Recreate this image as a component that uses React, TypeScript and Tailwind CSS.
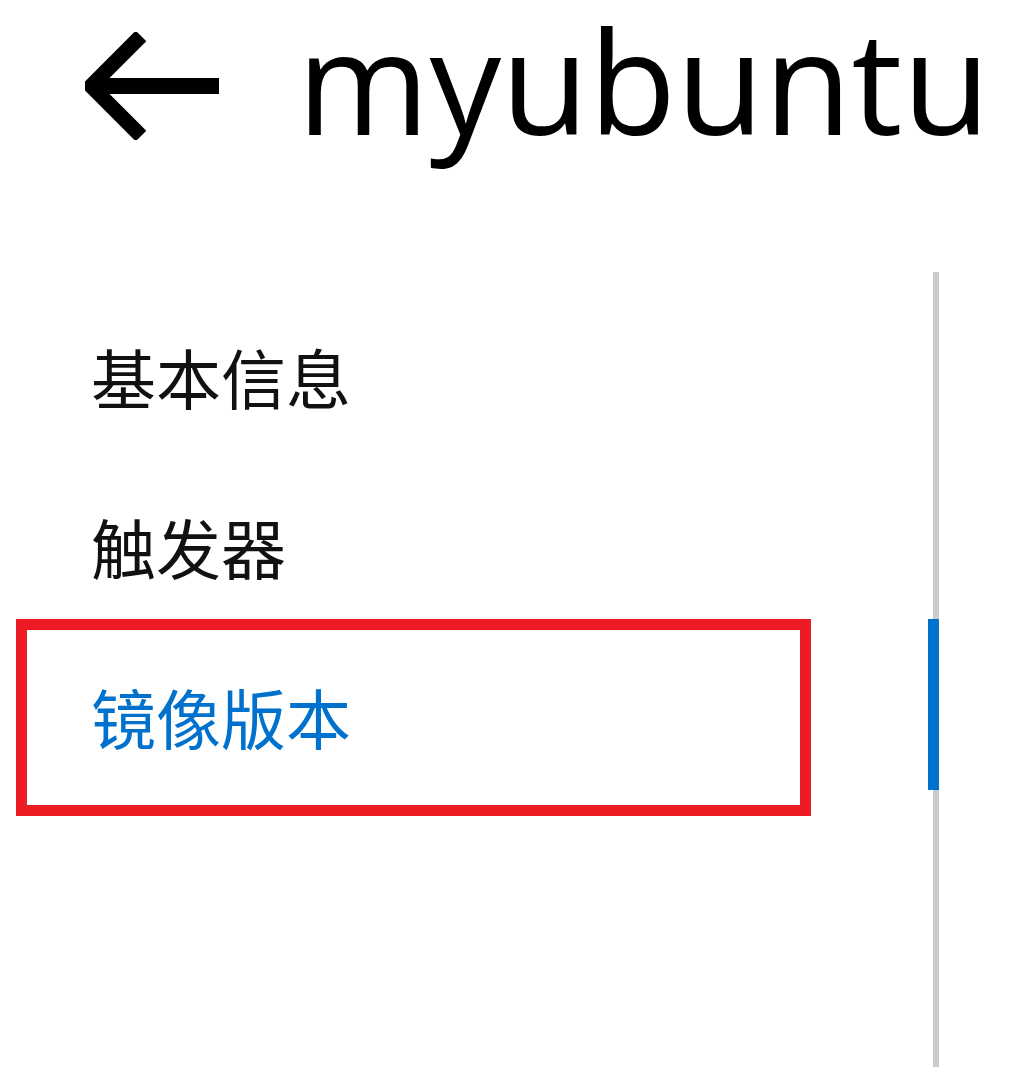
import React from "react";

export default function App() {
  const cjk = { fontFamily: '"Noto Sans CJK SC", "Noto Sans", sans-serif' };
  return (
    <div className="w-[1024px] h-[1067px] bg-white overflow-hidden flex flex-col">
      <div className="flex items-center h-[176px] shrink-0 pl-[85px] pb-[4px]">
        <svg width="136" height="108" viewBox="0 0 136 108" className="shrink-0">
          <path d="M56 4 L6 54 L56 104" fill="none" stroke="#000" strokeWidth="15" strokeLinejoin="miter" />
          <path d="M8 54 H134" stroke="#000" strokeWidth="16" />
        </svg>
        <div
          className="ml-[76px] shrink-0 whitespace-nowrap text-[143px] leading-[1.4] text-black mb-[12px]"
          style={{ fontFamily: '"Open Sans", sans-serif' }}
        >
          myubuntu
        </div>
      </div>
      <div className="flex flex-1 pt-[96px]">
        <div className="w-[928px] flex flex-col pt-[19px]">
          <div className="h-[170px] flex items-center pl-[91px] text-[65px] leading-none text-[#111]" style={cjk}>
            基本信息
          </div>
          <div className="h-[170px] flex items-center pl-[91px] text-[65px] leading-none text-[#111]" style={cjk}>
            触发器
          </div>
          <div className="relative h-[170px] flex items-center pl-[91px] text-[65px] leading-none text-[#0071cd]" style={cjk}>
            镜像版本
            <div className="absolute left-[16px] top-[-12px] w-[795px] h-[197px] border-[11px] border-[#ed1c24]" />
          </div>
        </div>
        <div className="relative w-[11px]">
          <div className="absolute right-0 top-0 bottom-0 w-[6px] bg-[#cccccc]" />
          <div className="absolute left-0 top-[347px] w-[11px] h-[171px] bg-[#0071cd]" />
        </div>
      </div>
    </div>
  );
}
